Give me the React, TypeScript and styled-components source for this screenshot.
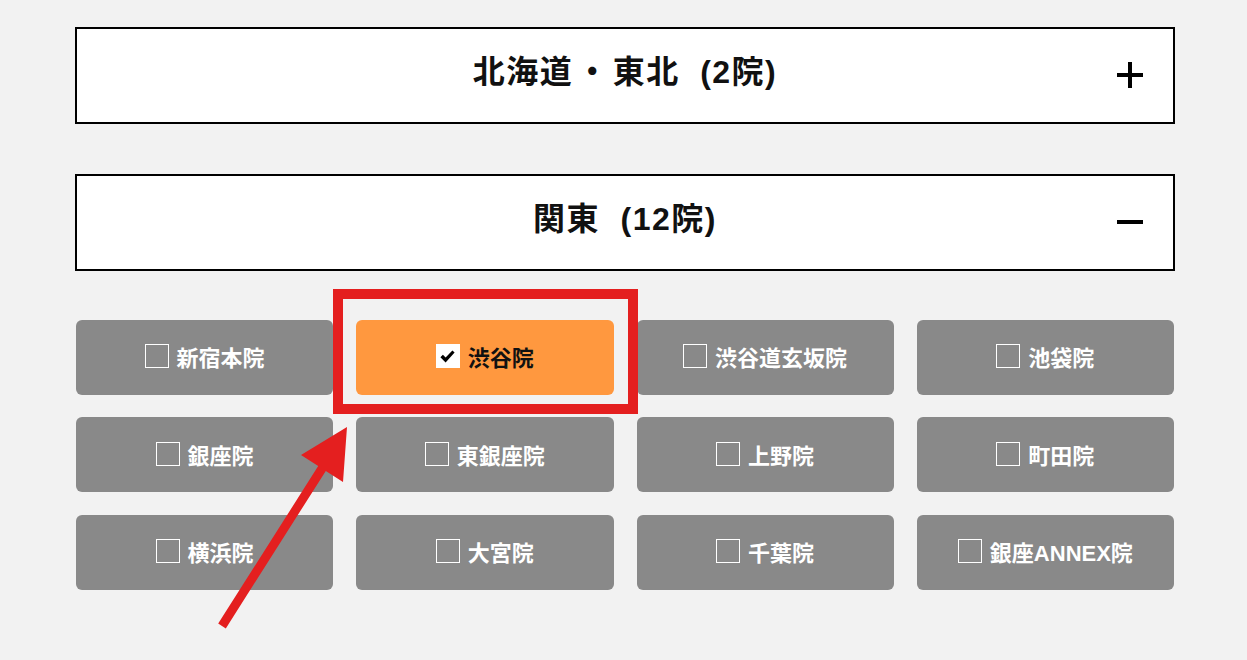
import React from "react";
import styled, { createGlobalStyle } from "styled-components";

const GlobalStyle = createGlobalStyle`
  html, body {
    margin: 0;
    padding: 0;
    background: #f2f2f2;
  }
  body {
    font-family: "Noto Sans CJK JP", "Noto Sans", sans-serif;
  }
  * { box-sizing: border-box; }
`;

const Page = styled.div`
  position: relative;
  width: 1247px;
  height: 660px;
  overflow: hidden;
  padding-top: 27px;
`;

const Container = styled.div`
  position: relative;
  width: 1100px;
  margin-left: 75px;
`;

const AccordionHeader = styled.div<{ $spaced?: boolean }>`
  display: grid;
  grid-template-columns: 1fr auto 1fr;
  align-items: center;
  height: 96.5px;
  margin-top: ${(p) => (p.$spaced ? "50.5px" : "0")};
  padding: 0 30px;
  background: #fff;
  border: 2px solid #000;
`;

const Title = styled.h2`
  grid-column: 2;
  margin: 0 0 7px;
  font-family: "Liberation Sans", "Noto Sans CJK JP", sans-serif;
  font-size: 32px;
  font-weight: 700;
  color: #111;
  line-height: 1;
  letter-spacing: 1.5px;
  word-spacing: 10px;
`;

const Dot = styled.span`
  margin: 0 3px;
`;

const ToggleIcon = styled.svg`
  grid-column: 3;
  justify-self: end;
  width: 26px;
  height: 26px;
  display: block;
`;

const Grid = styled.div`
  position: relative;
  display: grid;
  grid-template-columns: repeat(4, 1fr);
  column-gap: 23px;
  row-gap: 22.5px;
  margin-top: 49px;
  padding: 0 1px;
`;

const Clinic = styled.button<{ $checked?: boolean }>`
  display: flex;
  align-items: center;
  justify-content: center;
  gap: 8px;
  height: 75px;
  border: none;
  border-radius: 6px;
  padding: 0 0 2px;
  background: ${(p) => (p.$checked ? "#ff983f" : "#898989")};
  color: ${(p) => (p.$checked ? "#111" : "#fff")};
  font-family: "Liberation Sans", "Noto Sans CJK JP", sans-serif;
  font-size: 22px;
  font-weight: 700;
  cursor: pointer;
`;

const Box = styled.span<{ $checked?: boolean }>`
  display: flex;
  align-items: center;
  justify-content: center;
  width: 24px;
  height: 24px;
  border: 1px solid #fff;
  background: ${(p) => (p.$checked ? "#fff" : "transparent")};
`;

const Highlight = styled.div`
  position: absolute;
  left: 258px;
  top: -31px;
  width: 305px;
  height: 125px;
  border: 10px solid #e41f1f;
  pointer-events: none;
`;

const ArrowLayer = styled.svg`
  position: absolute;
  left: 0;
  top: 0;
  width: 1247px;
  height: 660px;
  pointer-events: none;
`;

const Plus = () => (
  <ToggleIcon viewBox="0 0 26 26">
    <rect x="0" y="11" width="26" height="4" fill="#000" />
    <rect x="11" y="0" width="4" height="26" fill="#000" />
  </ToggleIcon>
);

const Minus = () => (
  <ToggleIcon viewBox="0 0 26 26">
    <rect x="0" y="11" width="26" height="4" fill="#000" />
  </ToggleIcon>
);

const Check = () => (
  <svg width="15" height="13" viewBox="0 0 15 13">
    <path d="M0.4 7.2 L2.9 4.8 L5.6 7.4 L12.4 0.5 L14.6 2.6 L5.6 12.6 Z" fill="#000" />
  </svg>
);

const clinics = [
  "新宿本院",
  "渋谷院",
  "渋谷道玄坂院",
  "池袋院",
  "銀座院",
  "東銀座院",
  "上野院",
  "町田院",
  "横浜院",
  "大宮院",
  "千葉院",
  "銀座ANNEX院",
];

export default function App() {
  return (
    <>
      <GlobalStyle />
      <Page>
        <Container>
          <AccordionHeader>
            <Title>
              北海道<Dot>・</Dot>東北 (2院)
            </Title>
            <Plus />
          </AccordionHeader>
          <AccordionHeader $spaced>
            <Title>関東 (12院)</Title>
            <Minus />
          </AccordionHeader>
          <Grid>
            {clinics.map((name) => {
              const checked = name === "渋谷院";
              return (
                <Clinic key={name} $checked={checked}>
                  <Box $checked={checked}>{checked && <Check />}</Box>
                  {name}
                </Clinic>
              );
            })}
            <Highlight />
          </Grid>
        </Container>
        <ArrowLayer viewBox="0 0 1247 660">
          <polygon
            points="347,427 343,482 325.8,470.9 225.8,628.4 218.2,623.6 318.2,466.1 301,455"
            fill="#e41f1f"
          />
        </ArrowLayer>
      </Page>
    </>
  );
}
